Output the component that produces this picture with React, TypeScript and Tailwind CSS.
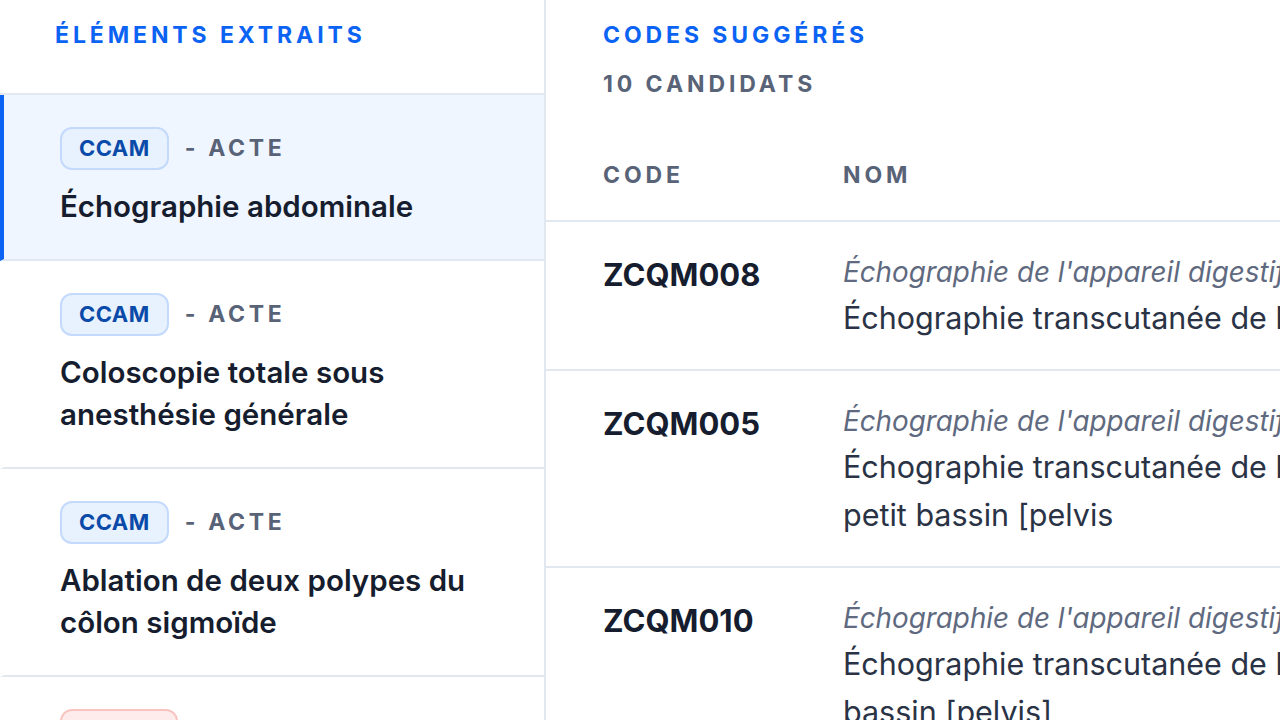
import React from "react";

interface Extracted {
  system: string;
  kind: string;
  label: string;
  tone: "blue" | "red";
}

interface Candidate {
  code: string;
  chapter: string;
  lines: string[];
}

const extracted: Extracted[] = [
  { system: "CCAM", kind: "ACTE", label: "Échographie abdominale", tone: "blue" },
  { system: "CCAM", kind: "ACTE", label: "Coloscopie totale sous anesthésie générale", tone: "blue" },
  { system: "CCAM", kind: "ACTE", label: "Ablation de deux polypes du côlon sigmoïde", tone: "blue" },
  { system: "CIM-10", kind: "DIAGNOSTIC", label: "Polypes du côlon", tone: "red" },
];

const candidates: Candidate[] = [
  {
    code: "ZCQM008",
    chapter: "Échographie de l'appareil digestif et de l'abdomen",
    lines: ["Échographie transcutanée de l'étage supérieur de l'abdomen"],
  },
  {
    code: "ZCQM005",
    chapter: "Échographie de l'appareil digestif et de l'abdomen",
    lines: ["Échographie transcutanée de l'abdomen, avec échographie transcutanée du", "petit bassin [pelvis"],
  },
  {
    code: "ZCQM010",
    chapter: "Échographie de l'appareil digestif et de l'abdomen",
    lines: ["Échographie transcutanée de l'étage supérieur de l'abdomen et du petit", "bassin [pelvis]"],
  },
];

export default function App() {
  return (
    <div
      className="flex h-[720px] w-[1280px] overflow-hidden bg-white text-[#161d2e]"
      style={{ fontFamily: "Inter, 'Noto Sans', sans-serif" }}
    >
      {/* Extracted items */}
      <aside className="flex w-[546px] shrink-0 flex-col border-r-2 border-[#e2e8f0]">
        <div className="h-[95px] shrink-0 border-b-2 border-[#e2e8f0] pl-[55px] pt-[20px]">
          <h2 className="text-[23px] font-bold uppercase leading-[30px] tracking-[0.17em] text-[#0b63f3]">
            Éléments extraits
          </h2>
        </div>
        {extracted.map((item, i) => (
          <div
            key={i}
            className={
              i === 0
                ? "shrink-0 border-b-2 border-l-4 border-b-[#e2e8f0] border-l-[#0b63f3] bg-[#f0f6ff] pb-[32px] pl-[56px] pr-8 pt-[32px]"
                : "shrink-0 border-b-2 border-l-4 border-b-[#e2e8f0] border-l-transparent pb-[32px] pl-[56px] pr-8 pt-[32px]"
            }
          >
            <div className="flex items-center gap-[16px]">
              <span
                className={
                  item.tone === "blue"
                    ? "flex h-[43px] items-center rounded-[12px] border-2 border-[#c3dafc] bg-[#e8f1fe] px-[17px] text-[22px] font-bold tracking-[0.02em] text-[#0a4aa8]"
                    : "flex h-[43px] items-center rounded-[12px] border-2 border-[#f9c4c0] bg-[#fdeceb] px-[17px] text-[22px] font-bold tracking-[0.02em] text-[#b42318]"
                }
              >
                {item.system}
              </span>
              <span className="text-[23px] font-bold uppercase tracking-[0.16em] text-[#596377]">
                - {item.kind}
              </span>
            </div>
            <p className="mt-[15px] max-w-[440px] text-[29.5px] font-semibold leading-[42px]">{item.label}</p>
          </div>
        ))}
      </aside>

      {/* Suggested codes */}
      <main className="flex min-w-0 flex-1 flex-col">
        <div className="pl-[57px] pt-[20px]">
          <h2 className="text-[23px] font-bold uppercase leading-[30px] tracking-[0.17em] text-[#0b63f3]">
            Codes suggérés
          </h2>
          <p className="mt-[19px] text-[23px] font-bold uppercase leading-[30px] tracking-[0.17em] text-[#596377]">
            10 candidats
          </p>
        </div>

        <div className="mt-[31px] flex h-[92px] shrink-0 items-center border-b-2 border-[#e2e8f0] pl-[57px] text-[23px] font-bold uppercase tracking-[0.17em] text-[#596377]">
          <span className="w-[240px] shrink-0">Code</span>
          <span>Nom</span>
        </div>

        {candidates.map((c) => (
          <div key={c.code} className="flex shrink-0 border-b-2 border-[#e2e8f0] pb-[27px] pl-[57px] pt-[28px]">
            <div className="w-[240px] shrink-0 text-[31px] font-bold leading-[50px]">{c.code}</div>
            <div className="min-w-0 flex-1">
              <div className="whitespace-nowrap text-[27.8px] italic leading-[44px] text-[#5f6a80]">{c.chapter}</div>
              {c.lines.map((line, j) => (
                <div key={j} className="whitespace-nowrap text-[30.5px] leading-[48px] text-[#2a3345]">
                  {line}
                </div>
              ))}
            </div>
          </div>
        ))}
      </main>
    </div>
  );
}
